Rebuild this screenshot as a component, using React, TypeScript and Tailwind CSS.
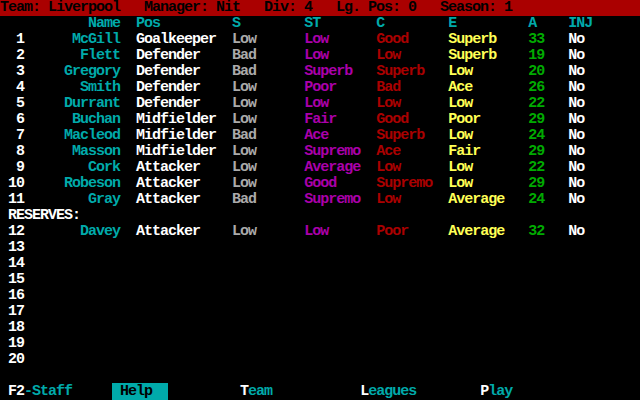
import React from "react";

type Seg = { col: number; text: string; cls: string; bg?: string };

const C = {
  cyan: "text-[#00AAAA]",
  white: "text-[#FFFFFF]",
  gray: "text-[#AAAAAA]",
  magenta: "text-[#AA00AA]",
  red: "text-[#AA0000]",
  yellow: "text-[#FFFF55]",
  green: "text-[#00AA00]",
  black: "text-[#000000]",
};

function Row({ segs, className = "" }: { segs: Seg[]; className?: string }) {
  const out: React.ReactNode[] = [];
  let pos = 0;
  segs.forEach((s, i) => {
    if (s.col > pos) {
      out.push(<span key={"p" + i}>{" ".repeat(s.col - pos)}</span>);
      pos = s.col;
    }
    out.push(
      <span key={"s" + i} className={s.cls + (s.bg ? " " + s.bg : "")}>
        {s.text}
      </span>
    );
    pos += s.text.length;
  });
  return <div className={"h-4 whitespace-pre " + className}>{out}</div>;
}

const players: [string, string, string, string, string, string, string, string][] = [
  ["McGill", "Goalkeeper", "Low", "Low", "Good", "Superb", "33", "No"],
  ["Flett", "Defender", "Bad", "Low", "Low", "Superb", "19", "No"],
  ["Gregory", "Defender", "Bad", "Superb", "Superb", "Low", "20", "No"],
  ["Smith", "Defender", "Low", "Poor", "Bad", "Ace", "26", "No"],
  ["Durrant", "Defender", "Low", "Low", "Low", "Low", "22", "No"],
  ["Buchan", "Midfielder", "Low", "Fair", "Good", "Poor", "29", "No"],
  ["Macleod", "Midfielder", "Bad", "Ace", "Superb", "Low", "24", "No"],
  ["Masson", "Midfielder", "Low", "Supremo", "Ace", "Fair", "29", "No"],
  ["Cork", "Attacker", "Low", "Average", "Low", "Low", "22", "No"],
  ["Robeson", "Attacker", "Low", "Good", "Supremo", "Low", "29", "No"],
  ["Gray", "Attacker", "Bad", "Supremo", "Low", "Average", "24", "No"],
];

const reserve: [string, string, string, string, string, string, string, string] = [
  "Davey", "Attacker", "Low", "Low", "Poor", "Average", "32", "No",
];

function playerSegs(n: number, p: string[]): Seg[] {
  const num = String(n);
  return [
    { col: 3 - num.length, text: num, cls: C.white },
    { col: 15 - p[0].length, text: p[0], cls: C.cyan },
    { col: 17, text: p[1], cls: C.white },
    { col: 29, text: p[2], cls: C.gray },
    { col: 38, text: p[3], cls: C.magenta },
    { col: 47, text: p[4], cls: C.red },
    { col: 56, text: p[5], cls: C.yellow },
    { col: 66, text: p[6], cls: C.green },
    { col: 71, text: p[7], cls: C.white },
  ];
}

function numSegs(n: number): Seg[] {
  const num = String(n);
  return [{ col: 3 - num.length, text: num, cls: C.white }];
}

export default function App() {
  return (
    <div
      className="w-[640px] h-[400px] bg-black overflow-hidden text-[15px] leading-4 tracking-[-1px] font-bold"
      style={{ fontFamily: '"Liberation Mono", "DejaVu Sans Mono", monospace' }}
    >
      <Row
        className="bg-[#AA0000]"
        segs={[
          {
            col: 0,
            text: "Team: Liverpool   Manager: Nit   Div: 4   Lg. Pos: 0   Season: 1",
            cls: C.black,
          },
        ]}
      />
      <Row
        segs={[
          { col: 11, text: "Name", cls: C.cyan },
          { col: 17, text: "Pos", cls: C.cyan },
          { col: 29, text: "S", cls: C.cyan },
          { col: 38, text: "ST", cls: C.cyan },
          { col: 47, text: "C", cls: C.cyan },
          { col: 56, text: "E", cls: C.cyan },
          { col: 66, text: "A", cls: C.cyan },
          { col: 71, text: "INJ", cls: C.cyan },
        ]}
      />
      {players.map((p, i) => (
        <Row key={i} segs={playerSegs(i + 1, p)} />
      ))}
      <Row segs={[{ col: 1, text: "RESERVES:", cls: C.white }]} />
      <Row segs={playerSegs(12, reserve)} />
      {[13, 14, 15, 16, 17, 18, 19, 20].map((n) => (
        <Row key={n} segs={numSegs(n)} />
      ))}
      <Row segs={[]} />
      <Row
        segs={[
          { col: 1, text: "F2", cls: C.white },
          { col: 3, text: "-Staff", cls: C.cyan },
          { col: 14, text: " Help  ", cls: C.black, bg: "bg-[#00AAAA]" },
          { col: 30, text: "T", cls: C.white },
          { col: 31, text: "eam", cls: C.cyan },
          { col: 45, text: "L", cls: C.white },
          { col: 46, text: "eagues", cls: C.cyan },
          { col: 60, text: "P", cls: C.white },
          { col: 61, text: "lay", cls: C.cyan },
        ]}
      />
    </div>
  );
}
